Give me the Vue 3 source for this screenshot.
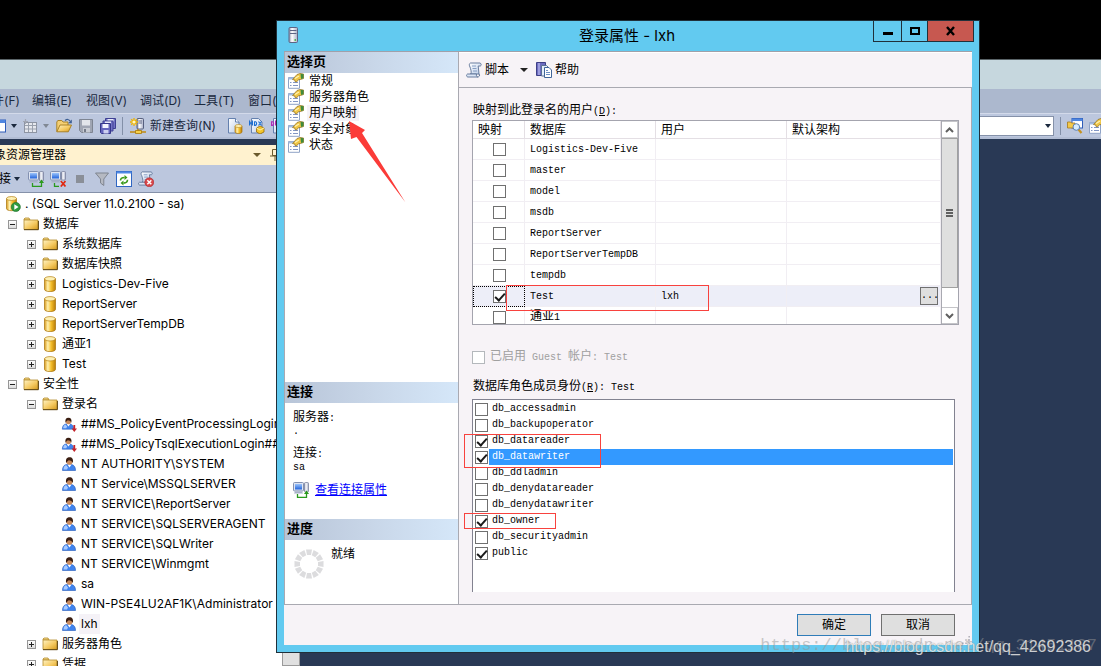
<script setup>
import { ref } from 'vue'

const menus = ['文件(F)', '编辑(E)', '视图(V)', '调试(D)', '工具(T)', '窗口(W)']

const tree = [
  { level: 0, icon: 'server', text: '. (SQL Server 11.0.2100 - sa)' },
  { level: 1, icon: 'folder', text: '数据库', toggle: 'minus' },
  { level: 2, icon: 'folder', text: '系统数据库', toggle: 'plus' },
  { level: 2, icon: 'folder', text: '数据库快照', toggle: 'plus' },
  { level: 2, icon: 'database', text: 'Logistics-Dev-Five', toggle: 'plus' },
  { level: 2, icon: 'database', text: 'ReportServer', toggle: 'plus' },
  { level: 2, icon: 'database', text: 'ReportServerTempDB', toggle: 'plus' },
  { level: 2, icon: 'database', text: '通亚1', toggle: 'plus' },
  { level: 2, icon: 'database', text: 'Test', toggle: 'plus' },
  { level: 1, icon: 'folder', text: '安全性', toggle: 'minus' },
  { level: 2, icon: 'folder', text: '登录名', toggle: 'minus' },
  { level: 3, icon: 'user-off', text: '##MS_PolicyEventProcessingLogin##' },
  { level: 3, icon: 'user-off', text: '##MS_PolicyTsqlExecutionLogin##' },
  { level: 3, icon: 'user', text: 'NT AUTHORITY\\SYSTEM' },
  { level: 3, icon: 'user', text: 'NT Service\\MSSQLSERVER' },
  { level: 3, icon: 'user', text: 'NT SERVICE\\ReportServer' },
  { level: 3, icon: 'user', text: 'NT SERVICE\\SQLSERVERAGENT' },
  { level: 3, icon: 'user', text: 'NT SERVICE\\SQLWriter' },
  { level: 3, icon: 'user', text: 'NT SERVICE\\Winmgmt' },
  { level: 3, icon: 'user', text: 'sa' },
  { level: 3, icon: 'user', text: 'WIN-PSE4LU2AF1K\\Administrator' },
  { level: 3, icon: 'user', text: 'lxh', selected: true },
  { level: 2, icon: 'folder', text: '服务器角色', toggle: 'plus' },
  { level: 2, icon: 'folder', text: '凭据', toggle: 'plus' },
]

const pages = ['常规', '服务器角色', '用户映射', '安全对象', '状态']
const currentPage = ref('用户映射')

const databases = ref([
  { name: 'Logistics-Dev-Five', user: '', mapped: false },
  { name: 'master', user: '', mapped: false },
  { name: 'model', user: '', mapped: false },
  { name: 'msdb', user: '', mapped: false },
  { name: 'ReportServer', user: '', mapped: false },
  { name: 'ReportServerTempDB', user: '', mapped: false },
  { name: 'tempdb', user: '', mapped: false },
  { name: 'Test', user: 'lxh', mapped: true, current: true },
  { name: '通亚1', user: '', mapped: false, cjk: true },
])

const roles = ref([
  { name: 'db_accessadmin', on: false },
  { name: 'db_backupoperator', on: false },
  { name: 'db_datareader', on: true },
  { name: 'db_datawriter', on: true, current: true },
  { name: 'db_ddladmin', on: false },
  { name: 'db_denydatareader', on: false },
  { name: 'db_denydatawriter', on: false },
  { name: 'db_owner', on: true },
  { name: 'db_securityadmin', on: false },
  { name: 'public', on: true },
])

const spokes = Array.from({ length: 12 }, (_, i) => i * 30)
</script>

<template>
  <div class="desktop">
    <svg class="defs" aria-hidden="true">
      <defs>
        <linearGradient id="gFolder" x1="0" y1="0" x2="1" y2="1">
          <stop offset="0" stop-color="#fff3c4" /><stop offset=".55" stop-color="#f5ca62" /><stop offset="1" stop-color="#d59a1c" />
        </linearGradient>
        <linearGradient id="gCyl" x1="0" x2="1">
          <stop offset="0" stop-color="#d99b1c" /><stop offset=".3" stop-color="#fff1b0" /><stop offset=".6" stop-color="#f6c02c" /><stop offset="1" stop-color="#b87c08" />
        </linearGradient>
        <linearGradient id="gBlue" x1="0" y1="0" x2="0" y2="1">
          <stop offset="0" stop-color="#9cc4fb" /><stop offset="1" stop-color="#2264dc" />
        </linearGradient>
        <linearGradient id="gPaper" x1="0" y1="0" x2="1" y2="1">
          <stop offset="0" stop-color="#fff" /><stop offset="1" stop-color="#b9cbe8" />
        </linearGradient>
        <linearGradient id="gTower" x1="0" x2="1">
          <stop offset="0" stop-color="#8c93b0" /><stop offset=".35" stop-color="#fff" /><stop offset="1" stop-color="#a9b0c8" />
        </linearGradient>
      </defs>
      <symbol id="i-folder" viewBox="0 0 16 16">
        <path d="M1 4V3l1-1h4l1 2z" fill="#f8dc8e" stroke="#b38a2c" stroke-width=".8" />
        <path d="M1 4h14v9.5H1z" fill="url(#gFolder)" stroke="#b38a2c" stroke-width=".8" />
        <path d="M1 13.7h14.4V5" fill="none" stroke="#5b4310" stroke-width="1" />
      </symbol>
      <symbol id="i-database" viewBox="0 0 16 16">
        <path d="M2.5 2.8v10.6c0 1.2 2.4 2.2 5.5 2.2s5.5-1 5.5-2.2V2.8z" fill="url(#gCyl)" stroke="#a8720a" stroke-width=".7" />
        <ellipse cx="8" cy="2.8" rx="5.5" ry="2.2" fill="#fdf0b4" stroke="#b68318" stroke-width=".7" />
      </symbol>
      <symbol id="i-server" viewBox="0 0 16 16">
        <path d="M1.5 2.5v10.2c0 1 2 2 5 2s5-1 5-2V2.5z" fill="url(#gCyl)" stroke="#a8720a" stroke-width=".7" />
        <ellipse cx="6.500" cy="2.500" rx="5" ry="2" fill="#fdf0b4" stroke="#b68318" stroke-width=".7" />
        <circle cx="10.800" cy="11" r="4.600" fill="#2f9a3e" stroke="#1c6e2a" stroke-width=".6" />
        <path d="M9.300 8.300v5.400l4.200-2.700z" fill="#fff" />
      </symbol>
      <symbol id="i-user" viewBox="0 0 16 16">
        <path d="M1.500 14.500c0-4 1.800-5.500 4-6h5c2.200.5 4 2 4 6z" fill="#3f83ee" stroke="#2559b8" stroke-width=".6" />
        <path d="M2.500 13.500c0-2.500 1-3.800 2.500-4.500l2 2.500-1 2z" fill="#a9cbff" />
        <path d="M6.500 8.500h4l-2 3z" fill="#fff" />
        <circle cx="8.500" cy="5.800" r="3" fill="#c98a5c" />
        <path d="M5.200 7.300c-.8-4 .5-6 3.300-6s4.100 2 3.300 5.700c-.8-2-2.300-2.700-4-2.800-1 .9-2 1.300-2.600 3.100z" fill="#3a1d10" />
      </symbol>
      <symbol id="i-user-off" viewBox="0 0 16 16">
        <use href="#i-user" x="0" y="0" width="14" height="15" />
        <path d="M13.300 9v5" stroke="#c4242c" stroke-width="1.800" />
        <path d="M10.600 12.500h5.400l-2.700 3.400z" fill="#c4242c" />
      </symbol>
      <symbol id="i-page" viewBox="0 0 16 16">
        <path d="M.5 4.500h11v10.800H.5z" fill="#fff" stroke="#8fa3c6" />
        <path d="M.5 4.500h11v2H.5z" fill="#a5bce0" />
        <path d="M2 9.500h1.500M2 12.500h1.500M5 9.500h5M5 12.500h5" stroke="#8296c4" />
        <path d="M4.500 6.500l4.500-5 3-1 3.500.5v4.500l-3 1-2 .2-2 2.300-1.500-.5-.3-1.500z" fill="#efc544" stroke="#8a6a20" stroke-width=".7" />
        <path d="M12.500.8l3 .4v4l-2.500.8z" fill="#3f8b3c" />
        <path d="M7 5.500l4-2.500" stroke="#fff2b0" stroke-width="1.200" />
      </symbol>
      <symbol id="i-connect" viewBox="0 0 16 16">
        <rect x=".5" y=".5" width="10" height="8.500" rx="1" fill="#dfe5f2" stroke="#8290b0" />
        <rect x="2" y="2" width="7" height="5.500" fill="url(#gBlue)" />
        <path d="M2 9.500h7l1 2H1z" fill="#a7b1c8" />
        <rect x="11.500" y=".5" width="4" height="9.500" rx="1" fill="url(#gTower)" stroke="#7c84a0" stroke-width=".8" />
        <path d="M4.500 12v3.300h9V11" fill="none" stroke="#2a9a1c" stroke-width="1.300" />
        <path d="M11 12l2.500-3.500L16 12z" fill="#2a9a1c" />
      </symbol>
      <symbol id="i-disconnect" viewBox="0 0 16 16">
        <rect x=".5" y=".5" width="10" height="8.500" rx="1" fill="#dfe5f2" stroke="#8290b0" />
        <rect x="2" y="2" width="7" height="5.500" fill="url(#gBlue)" />
        <path d="M2 9.500h7l1 2H1z" fill="#a7b1c8" />
        <rect x="11.500" y=".5" width="4" height="8.500" rx="1" fill="url(#gTower)" stroke="#7c84a0" stroke-width=".8" />
        <path d="M4.500 12v3.300H9" fill="none" stroke="#2a9a1c" stroke-width="1.300" />
        <path d="M10.800 10l4.700 5.500M15.500 10l-4.700 5.500" stroke="#e02810" stroke-width="1.700" />
      </symbol>
      <symbol id="i-filter" viewBox="0 0 16 16">
        <path d="M1.500 2h13L9.800 8v6.500L6.500 12V8z" fill="#b5b9c2" stroke="#7f8590" />
      </symbol>
      <symbol id="i-refresh" viewBox="0 0 16 16">
        <rect x=".5" y=".5" width="15" height="15" fill="#fff" stroke="#2f66c2" />
        <path d="M.5 1.500h15" stroke="#4f89e6" stroke-width="2" />
        <path d="M4.500 9.500c0-2 1.300-3 4-3M11.500 8.800c0 2.200-1.300 3.300-4 3.300" fill="none" stroke="#3d9b1c" stroke-width="1.600" />
        <path d="M8.500 4l3 2.500-3 2.500zM7.500 9.600l-3 2.500 3 2.400z" fill="#3d9b1c" />
      </symbol>
      <symbol id="i-scroll" viewBox="0 0 16 16">
        <path d="M4.500 1h9.500c1.500.5 1.600 2.700.3 3h-2.100l.8 8H4.700C6 10 4.500 7 4 5 3 3.500 3 1.500 4.500 1z" fill="url(#gPaper)" stroke="#5a7194" stroke-width=".9" />
        <path d="M1.500 12h9c-.4 1.500 0 2.500 1.200 3h-10C.3 14.700.2 12.500 1.500 12z" fill="#dce6f6" stroke="#5a7194" stroke-width=".9" />
        <path d="M11.500 15c1.800 0 2.600-1.500 1.600-3" fill="none" stroke="#5a7194" />
        <path d="M6 4h4M6.500 6.500h4M7 9h4" stroke="#7e95bd" stroke-width=".9" />
      </symbol>
      <symbol id="i-scroll-x" viewBox="0 0 16 16">
        <use href="#i-scroll" width="15" height="15" />
        <circle cx="11.300" cy="11.300" r="4.500" fill="#d8474a" stroke="#a8282c" stroke-width=".6" />
        <path d="M9.300 9.300l4 4M13.300 9.300l-4 4" stroke="#fff" stroke-width="1.500" />
      </symbol>
      <symbol id="i-help" viewBox="0 0 16 16">
        <path d="M.5.500h9v13h-9z" fill="#6d6cc0" stroke="#3e3f86" />
        <path d="M3 1v12" stroke="#b9b8ee" stroke-width="1.300" />
        <path d="M5.500 3.500h5l2 2v8.500h-7z" fill="#e6eefb" stroke="#5a7194" />
        <path d="M8.500 5.500h4.500l2.500 2.500v7.500h-7z" fill="#fff" stroke="#41669a" />
        <path d="M10 8.500h2M10 10.500h4M10 12.500h4" stroke="#6d8fc4" />
      </symbol>
      <symbol id="i-tower" viewBox="0 0 16 16">
        <rect x="5" y=".5" width="8.500" height="15" rx="1" fill="url(#gTower)" stroke="#5c6484" />
        <path d="M6 3.500h6.500M6 6.500h6.500" stroke="#5c6484" />
        <path d="M10.500 13h1.500" stroke="#2fae2c" stroke-width="1.500" />
      </symbol>
      <symbol id="i-window" viewBox="0 0 16 16">
        <rect x=".5" y="2" width="15" height="12" fill="#fff" stroke="#2f5cb8" />
        <path d="M1 3.500h14.500" stroke="#4f86e0" stroke-width="3" />
      </symbol>
      <symbol id="i-grid" viewBox="0 0 16 16">
        <rect x="2.500" y="4.500" width="12" height="10" fill="#e6e8ee" stroke="#8d94a2" />
        <path d="M3 7.500h11M3 11h11M6.500 5v9M10.500 5v9" stroke="#9aa1ae" />
        <path d="M1 3.500h5M3.500 1v5" stroke="#a2a7b3" stroke-width="1.200" />
      </symbol>
      <symbol id="i-open" viewBox="0 0 16 16">
        <path d="M.8 13.500V4l1-1.500h4L7 4h5v3" fill="#f4cf74" stroke="#a47a1c" stroke-width=".9" />
        <path d="M.8 13.800L4 7h11.500l-3.200 6.800z" fill="url(#gFolder)" stroke="#a47a1c" stroke-width=".9" />
        <path d="M9 2.500c2-1.500 4-1.500 5.200.8" fill="none" stroke="#3c5e94" stroke-width="1.200" />
        <path d="M15.800 1.500v3.800h-3.600z" fill="#3c5e94" />
      </symbol>
      <symbol id="i-save" viewBox="0 0 16 16">
        <path d="M1.500 1.500h13v13h-11l-2-2z" fill="#a0a6b3" stroke="#7e8592" />
        <path d="M4 2h8v5.500H4z" fill="#e2e5ea" />
        <path d="M5 10h7v4.500H5z" fill="#c8ccd4" /><path d="M6 11h2v3H6z" fill="#737a88" />
      </symbol>
      <symbol id="i-save-all" viewBox="0 0 16 16">
        <path d="M5.500.500h10v10h-10z" fill="#7273c6" stroke="#3e4092" /><path d="M7.500 1h6v3h-6z" fill="#e6e9fa" />
        <path d="M3 3h10v10H3z" fill="#7273c6" stroke="#3e4092" /><path d="M5 3.500h6v3H5z" fill="#e6e9fa" />
        <path d="M.5 5.500h10v10h-9l-1-1z" fill="#6465bd" stroke="#34368a" /><path d="M2.500 6h6v4h-6z" fill="#f2f4ff" /><path d="M3.500 12h5v3.500h-5z" fill="#cdd0f0" />
      </symbol>
      <symbol id="i-new-query" viewBox="0 0 16 16">
        <rect x="7" y=".5" width="6.500" height="10.500" rx="1" fill="url(#gTower)" stroke="#4c5574" stroke-width=".9" />
        <path d="M8.500 3h3.500M8.500 5h3.500" stroke="#5c6484" />
        <path d="M0 14h16M8 11v3" stroke="#c08a10" stroke-width="1.500" /><path d="M5.500 12.500h6v3h-6z" fill="#f7d14a" stroke="#a87808" stroke-width=".8" />
        <path d="M4 0v8M0 4h8M1.200 1.200l5.600 5.600M6.800 1.200L1.200 6.800" stroke="#f0b400" stroke-width="1.300" /><circle cx="4" cy="4" r="1.600" fill="#fff9c8" />
      </symbol>
      <symbol id="i-doc-db" viewBox="0 0 16 16">
        <path d="M1.500.500h7l3.500 3.500v11H1.500z" fill="url(#gPaper)" stroke="#6480ae" /><path d="M8.500.500v3.500H12" fill="#fff" stroke="#6480ae" />
        <path d="M8 8v5.800c0 1 1.300 1.700 3.500 1.700s3.500-.7 3.500-1.700V8z" fill="url(#gCyl)" stroke="#a8720a" stroke-width=".7" /><ellipse cx="11.500" cy="8" rx="3.500" ry="1.500" fill="#fdf0b4" stroke="#b68318" stroke-width=".6" />
      </symbol>
      <symbol id="i-mdx" viewBox="0 0 16 16">
        <path d="M2.500.500h7l3.500 3.500v11H2.500z" fill="url(#gPaper)" stroke="#6480ae" />
        <path d="M.5 7.500V3.500L2 6l1.500-2.500v4M5.500 3.500v4c2.800 0 2.800-4 0-4M9.500 3.500l3 4M12.500 3.500l-3 4" fill="none" stroke="#1c6ed0" stroke-width="1.100" />
        <path d="M11 8l4 2v4l-4 2-3.500-2v-4z" fill="#f3c62c" stroke="#9a6c06" stroke-width=".8" /><path d="M7.500 10l3.500 2 4-2" fill="none" stroke="#fff3b0" />
      </symbol>
      <symbol id="i-dmx" viewBox="0 0 16 16">
        <path d="M2.500.500h7l3.500 3.500v11H2.500z" fill="url(#gPaper)" stroke="#6480ae" />
        <path d="M.5 3.500v4c2.800 0 2.800-4 0-4M4.500 7.500v-4L6 6l1.500-2.500v4" fill="none" stroke="#b02cb8" stroke-width="1.100" />
      </symbol>
      <symbol id="i-find" viewBox="0 0 16 16">
        <rect x="5" y=".5" width="10.500" height="9.500" fill="#fff" stroke="#2f5cb8" /><path d="M5 1.800h10.500" stroke="#4f86e0" stroke-width="2.500" />
        <path d="M.5 4h3l1 1h3.500v5H.5z" fill="#f3c94c" stroke="#a47a1c" stroke-width=".8" />
        <path d="M11.500 11.500l3 3.500" stroke="#c59220" stroke-width="2.200" /><circle cx="9.300" cy="9" r="3.300" fill="#d6ecff" stroke="#5a7fb0" />
      </symbol>
    </svg>

    <div class="remote-bar"></div>

    <section class="studio">
      <div class="studio-title"></div>
      <nav class="menu-bar" aria-label="主菜单">
        <button v-for="m in menus" :key="m" type="button">{{ m }}</button>
      </nav>
      <div class="tool-bar">
        <div class="tools">
          <button type="button" class="tool" aria-label="新建"><svg class="ic"><use href="#i-window" /></svg></button>
          <i class="caret caret-a"></i>
          <button type="button" class="tool" aria-label="添加"><svg class="ic"><use href="#i-grid" /></svg></button>
          <i class="caret caret-b dim"></i>
          <button type="button" class="tool" aria-label="打开"><svg class="ic"><use href="#i-open" /></svg></button>
          <button type="button" class="tool" aria-label="保存"><svg class="ic"><use href="#i-save" /></svg></button>
          <button type="button" class="tool" aria-label="全部保存"><svg class="ic"><use href="#i-save-all" /></svg></button>
          <i class="sep"></i>
          <button type="button" class="tool query"><svg class="ic"><use href="#i-new-query" /></svg>新建查询(N)</button>
          <button type="button" class="tool" aria-label="数据库引擎查询"><svg class="ic"><use href="#i-doc-db" /></svg></button>
          <button type="button" class="tool" aria-label="MDX"><svg class="ic"><use href="#i-mdx" /></svg></button>
          <button type="button" class="tool" aria-label="DMX"><svg class="ic"><use href="#i-dmx" /></svg></button>
        </div>
        <div class="tools-end">
          <span class="combo"><select aria-label="查找"><option></option></select><i class="caret"></i></span>
          <i class="sep"></i>
          <button type="button" class="tool" aria-label="在文件中查找"><svg class="ic"><use href="#i-find" /></svg></button>
          <button type="button" class="tool" aria-label="属性窗口"><svg class="ic"><use href="#i-page" /></svg></button>
        </div>
      </div>

      <aside class="explorer">
        <header class="explorer-head">
          <h2>对象资源管理器</h2>
          <i class="caret gold"></i>
          <svg class="pin" viewBox="0 0 10 12"><path d="M2.500.500h5v6h-5zM0 7h10M5 7v5M6.500 1v6" fill="none" stroke="#6b5a2c" /></svg>
        </header>
        <div class="explorer-tools">
          <button type="button" class="link-btn">连接</button>
          <i class="caret"></i>
          <button type="button" class="tool" aria-label="连接对象"><svg class="ic"><use href="#i-connect" /></svg></button>
          <button type="button" class="tool" aria-label="断开连接"><svg class="ic"><use href="#i-disconnect" /></svg></button>
          <button type="button" class="tool" aria-label="停止"><i class="stop"></i></button>
          <button type="button" class="tool" aria-label="筛选"><svg class="ic"><use href="#i-filter" /></svg></button>
          <button type="button" class="tool" aria-label="刷新"><svg class="ic"><use href="#i-refresh" /></svg></button>
          <button type="button" class="tool" aria-label="策略"><svg class="ic"><use href="#i-scroll-x" /></svg></button>
        </div>
        <div class="tree-wrap">
          <ul class="tree">
            <li v-for="n in tree" :key="n.text" :class="'lv' + n.level">
              <button v-if="n.toggle" type="button" class="toggle" :class="n.toggle" :aria-label="n.text"></button>
              <svg class="ic"><use :href="'#i-' + n.icon" /></svg>
              <span class="node" :class="{ sel: n.selected }">{{ n.text }}</span>
            </li>
          </ul>
          <div class="tree-scroll"></div>
        </div>
      </aside>
    </section>

    <section class="dialog" role="dialog" aria-labelledby="dlg-title">
      <header class="title-bar">
        <svg class="ic app"><use href="#i-tower" /></svg>
        <h1 id="dlg-title">登录属性 - lxh</h1>
        <div class="win-btns">
          <button type="button" class="min" aria-label="最小化"><svg viewBox="0 0 12 10"><path d="M1 7.500h10" stroke="#000" stroke-width="3" /></svg></button>
          <button type="button" class="max" aria-label="最大化"><svg viewBox="0 0 12 10"><path d="M2 2h8v6H2z" fill="none" stroke="#000" stroke-width="2" /></svg></button>
          <button type="button" class="close" aria-label="关闭"><svg viewBox="0 0 12 10"><path d="M2 1l7 8M9 1L2 9" stroke="#000" stroke-width="2.400" /></svg></button>
        </div>
      </header>

      <div class="dlg-inner">
        <div class="panes">
          <aside class="side">
            <h2 class="band">选择页</h2>
            <ul class="pages">
              <li v-for="p in pages" :key="p">
                <button type="button" :class="{ on: p === currentPage }" @click="currentPage = p">
                  <svg class="ic"><use href="#i-page" /></svg><span>{{ p }}</span>
                </button>
              </li>
            </ul>
            <h2 class="band">连接</h2>
            <div class="conn">
              <dl>
                <dt>服务器<span class="mono">:</span></dt><dd class="mono">.</dd>
                <dt>连接<span class="mono">:</span></dt><dd class="mono">sa</dd>
              </dl>
              <p><svg class="ic"><use href="#i-connect" /></svg><a href="#">查看连接属性</a></p>
            </div>
            <h2 class="band">进度</h2>
            <div class="progress">
              <svg class="spin" viewBox="0 0 30 30">
                <path v-for="a in spokes" :key="a" d="M12 .5h6l-1 5.500h-4z" fill="#dcdcde" :transform="`rotate(${a} 15 15)`" />
              </svg>
              <span>就绪</span>
            </div>
          </aside>

          <main class="content">
            <div class="dlg-tools">
              <button type="button" class="tool text"><svg class="ic"><use href="#i-scroll" /></svg>脚本</button>
              <i class="caret big"></i>
              <button type="button" class="tool text"><svg class="ic"><use href="#i-help" /></svg>帮助</button>
            </div>
            <div class="body">
              <p class="cap">映射到此登录名的用户<span class="mono">(<u>D</u>):</span></p>
              <div class="grid-box">
                <table>
                  <colgroup><col class="c1" /><col class="c2" /><col class="c3" /><col /></colgroup>
                  <thead><tr><th>映射</th><th>数据库</th><th>用户</th><th>默认架构</th></tr></thead>
                  <tbody>
                    <tr v-for="d in databases" :key="d.name" :class="{ cur: d.current }">
                      <td class="chk"><input v-model="d.mapped" type="checkbox" class="box" :aria-label="d.name" /></td>
                      <td><template v-if="d.cjk">通亚<span class="mono">1</span></template><span v-else class="mono">{{ d.name }}</span></td>
                      <td><span class="mono">{{ d.user }}</span></td>
                      <td class="last"><button v-if="d.current" type="button" class="more" aria-label="浏览">...</button></td>
                    </tr>
                  </tbody>
                </table>
                <div class="vbar">
                  <button type="button" aria-label="向上"><svg viewBox="0 0 9 6"><path d="M1 5l3.500-3.500L8 5" /></svg></button>
                  <div class="track"><div class="thumb"><i></i><i></i><i></i></div></div>
                  <button type="button" aria-label="向下"><svg viewBox="0 0 9 6"><path d="M1 1l3.500 3.500L8 1" /></svg></button>
                </div>
              </div>
              <label class="guest"><input type="checkbox" class="box" disabled /><span>已启用<span class="mono"> Guest </span>帐户<span class="mono">: Test</span></span></label>
              <p class="cap2">数据库角色成员身份<span class="mono">(<u>R</u>): Test</span></p>
              <ul class="roles">
                <li v-for="r in roles" :key="r.name" :class="{ cur: r.current }">
                  <label><input v-model="r.on" type="checkbox" class="box" /><span class="mono">{{ r.name }}</span></label>
                </li>
              </ul>
            </div>
          </main>
        </div>
        <footer class="foot">
          <button type="button" class="btn primary">确定</button>
          <button type="button" class="btn">取消</button>
          <svg class="grip" viewBox="0 0 10 10"><path d="M8 0h2v2H8zM4 4h2v2H4zM8 4h2v2H8zM0 8h2v2H0zM4 8h2v2H4zM8 8h2v2H8z" fill="#b4b2ba" /></svg>
        </footer>
      </div>
    </section>

    <div class="mark mark-user"></div>
    <div class="mark mark-read"></div>
    <div class="mark mark-owner"></div>
    <svg class="arrow" viewBox="0 0 58 84"><path d="M1 1L17 10l-3 3L57.500 82.500 8.500 17 3 19z" fill="#fb3b38" /></svg>

    <div class="wm wm-old">https://blog.csdn.net/qq_31451137</div>
    <div class="wm wm-new">https://blog.csdn.net/qq_42692386</div>
  </div>
</template>

<style>
html, body { margin: 0; background: #293955; }
</style>

<style scoped>
* { box-sizing: border-box; }
.desktop {
  position: relative; height: 100vh; overflow: hidden; display: flex; flex-direction: column;
  font: 12px/16px Inter, "Noto Sans CJK SC", sans-serif; color: #000; background: #293955;
}
button { font: inherit; color: inherit; background: none; border: 0; padding: 0; margin: 0; white-space: nowrap; }
h1, h2, p, ul, dl, dd { margin: 0; padding: 0; font-weight: normal; list-style: none; }
.defs { position: absolute; width: 0; height: 0; }
.ic { width: 16px; height: 16px; flex: none; display: block; }
.mono { font-family: "Liberation Mono", monospace; font-size: 10px; white-space: pre; }
.remote-bar { flex: none; height: 59px; background: #000; }

.studio { flex: 1; min-height: 0; display: flex; flex-direction: column; border-top: 1px solid #5a6468; }
.studio-title { flex: none; height: 29px; background: #c6d7de; }
.menu-bar { flex: none; display: flex; height: 24px; background: #acb8ce; overflow: hidden; color: #1b293e; }
.menu-bar button { flex: none; width: 54px; text-align: left; }
.menu-bar button:first-child { margin-left: -20px; width: 52px; }
.tool-bar { flex: none; display: flex; justify-content: space-between; height: 26px; background: #bcc7de; border-top: 1px solid #d3daea; border-bottom: 2px solid #b2bdd4; color: #1b293e; }
.tools, .tools-end { display: flex; align-items: center; }
.tools { margin-left: -10px; gap: 6px; }
.tools-end { gap: 6px; margin-right: -4px; }
.tool { display: flex; align-items: center; flex: none; }
.query { gap: 4px; margin: 0 5px 0 1px; }
.caret { flex: none; width: 0; height: 0; border: 3px solid transparent; border-top: 4px solid #1b293e; border-bottom: 0; }
.caret-a, .caret-b { margin: 0 -1px; }
.caret-b { margin-right: 1px; }
.caret.dim { border-top-color: #808894; }
.caret.gold { border-width: 4px 4px 0; border-top-color: #6b5a2c; }
.caret.big { border-width: 4px 4px 0; border-top-color: #222; }
.sep { flex: none; width: 1px; height: 18px; background: #8390a8; }
.combo { position: relative; display: block; width: 200px; height: 20px; }
.combo select { appearance: none; width: 100%; height: 20px; border: 1px solid #8591a9; background: #fff; border-radius: 0; display: block; }
.combo .caret { position: absolute; right: 3px; top: 8px; }

.explorer { flex: 1; min-height: 0; width: 300px; margin-top: 6px; display: flex; flex-direction: column; }
.explorer-head { flex: none; display: flex; align-items: center; height: 20px; background: #fff2cf; overflow: hidden; }
.explorer-head h2 { flex: none; width: 271px; margin-left: -18px; font-size: 12px; }
.pin { flex: none; width: 10px; height: 12px; margin-left: 9px; }
.explorer-tools { flex: none; display: flex; align-items: center; gap: 6px; height: 28px; background: #bcc7de; border-bottom: 1px solid #8591a9; }
.link-btn { margin-left: -13px; margin-right: -3px; }
.explorer-tools .caret { margin-right: 2px; }
.stop { display: block; width: 8px; height: 8px; background: #8a8f98; margin: 0 4px; }
.tree-wrap { flex: 1; min-height: 0; display: flex; background: #fff; }
.tree { flex: 1; min-width: 0; overflow: hidden; padding-top: 1px; }
.tree li { display: flex; align-items: center; height: 20px; white-space: nowrap; }
.tree .lv0 { padding-left: 5px; }
.tree .lv1 { padding-left: 8px; }
.tree .lv2 { padding-left: 27px; }
.tree .lv3 { padding-left: 61px; }
.toggle { position: relative; flex: none; width: 9px; height: 9px; border: 1px solid #969696; background: linear-gradient(#fff, #dcdcdc); margin-right: 6px; }
.toggle::before { content: ""; position: absolute; left: 1px; right: 1px; top: 3px; height: 1px; background: #222; }
.toggle.plus::after { content: ""; position: absolute; top: 1px; bottom: 1px; left: 3px; width: 1px; background: #222; }
.node { padding: 2px; margin-left: 2px; }
.node.sel { background: #f5f2f7; }
.tree-scroll { flex: none; width: 18px; background: #e0e0e0; border: 1px solid #9a9a9a; }

.dialog { position: absolute; left: 276px; right: 121px; top: 20px; background: #62caf0; border: 1px solid #20303a; padding: 0 7px 7px; }
.title-bar { display: flex; height: 30px; align-items: flex-start; }
.title-bar .app { margin-top: 6px; }
.title-bar h1 { flex: 1; text-align: center; font-size: 15px; line-height: 30px; margin-left: 81px; }
.win-btns { display: flex; flex: none; margin-right: -2px; border: 1px solid #20303a; border-top: 0; height: 21px; }
.win-btns button { display: flex; align-items: center; justify-content: center; border-right: 1px solid #20303a; }
.win-btns svg { width: 12px; height: 10px; display: block; }
.win-btns .min { width: 28px; }
.win-btns .max { width: 26px; }
.win-btns .close { width: 45px; border-right: 0; background: #c75850; }
.dlg-inner { background: #f7f3f7; border-top: 1px solid #a0a0aa; }
.panes { display: flex; border-bottom: 1px solid #a9a9b1; }
.side { flex: none; width: 175px; background: #fff; border-left: 1px solid #a9a9b1; border-right: 1px solid #a9a9b1; display: flex; flex-direction: column; }
.band { flex: none; height: 21px; line-height: 18px; padding-left: 2px; font-size: 13px; font-weight: bold; background: linear-gradient(90deg, #b8c5d8, #c8d6e8 50%, #d5e7f9); }
.pages { flex: 1; }
.pages button { display: flex; align-items: center; height: 16px; gap: 3px; margin-left: 3px; }
.pages span { height: 16px; padding: 0 2px; }
.pages .on span { background: #f5f2f7; }
.conn { flex: none; height: 116px; padding: 6px 0 0 8px; }
.conn dt { line-height: 16px; height: 16px; }
.conn dd { height: 20px; line-height: 14px; }
.conn p { display: flex; align-items: center; gap: 6px; margin-top: 1px; height: 16px; }
.conn a { color: #00f; text-decoration: underline; }
.progress { flex: none; height: 64px; padding: 6px 0 0 9px; display: flex; gap: 7px; }
.spin { width: 30px; height: 30px; margin-top: 3px; }
.content { flex: 1; min-width: 0; }
.dlg-tools { display: flex; align-items: center; height: 36px; padding-left: 7px; border-bottom: 1px solid #a9a9b1; border-top: 1px solid #fff; }
.tool.text { gap: 3px; }
.big { margin: 0 8px 0 11px; }
.body { border-right: 1px solid #a9a9b1; padding: 14px 12px 12px 13px; }
.cap { height: 18px; padding-left: 1px; }
.grid-box { display: flex; height: 205px; overflow: hidden; background: #fff; border: 1px solid #a4a4ae; }
table { flex: 1; min-width: 0; border-collapse: separate; border-spacing: 0; table-layout: fixed; height: max-content; }
.c1 { width: 52px; } .c2 { width: 131px; } .c3 { width: 131px; }
th { height: 18px; padding: 0 5px; text-align: left; font-weight: normal; line-height: 16px; border-right: 1px solid #e4dfe4; border-bottom: 1px solid #e4dfe4; }
td { height: 21px; padding: 0 5px; line-height: 16px; border-right: 1px solid #f1eef3; border-bottom: 1px solid #f1eef3; }
td.chk { padding: 1px 0 0 20px; }
td.last { text-align: right; padding: 0 2px 0 0; }
.cur td { background: #edeef8; }
.cur td.chk { outline: 1px dotted #000; outline-offset: -1px; }
.box { appearance: none; display: block; flex: none; margin: 0; width: 13px; height: 13px; border: 1px solid #707070; border-radius: 0; background: #fff; position: relative; }
.box:checked::after { content: ""; position: absolute; left: 3px; top: 0; width: 4px; height: 8px; border: solid #1a1a1a; border-width: 0 2px 2px 0; transform: rotate(42deg); }
.box:disabled { border-color: #b4b8bc; }
.more { width: 18px; height: 18px; border: 1px solid #707070; background: #dfdfdf; font: 10px/12px "Liberation Mono", monospace; display: block; margin-left: auto; }
.vbar { flex: none; width: 17px; border-left: 1px solid #a9a9b1; display: flex; flex-direction: column; }
.vbar button { height: 17px; border: 1px solid #c4c4c8; border-left: 0; display: flex; align-items: center; justify-content: center; }
.vbar svg { width: 9px; height: 6px; fill: none; stroke: #606060; stroke-width: 2; }
.track { flex: 1; display: flex; flex-direction: column; padding-bottom: 19px; }
.thumb { flex: 1; background: #dfdfdf; border: 1px solid #a0a0a0; border-left: 0; display: flex; flex-direction: column; gap: 1px; align-items: center; justify-content: center; }
.thumb i { width: 7px; height: 2px; background: #606060; }
.guest { display: flex; align-items: center; gap: 5px; color: #a0a0a0; height: 16px; margin-top: 24px; white-space: pre; }
.cap2 { margin-top: 13px; height: 21px; padding-left: 1px; }
.roles { height: 193px; margin-right: 4px; background: #fff; border: 1px solid #828290; border-bottom: 0; padding: 1px 1px 0 2px; }
.roles label { display: flex; align-items: center; height: 16px; }
.roles .mono { flex: 1; height: 16px; line-height: 15px; padding-left: 3px; margin-left: 1px; }
.roles .cur .mono { background: #3399ff; color: #fff; }
.foot { position: relative; display: flex; justify-content: flex-end; gap: 10px; padding: 9px 17px 9px 0; }
.btn { width: 74px; height: 22px; background: #dfdfdf; border: 1px solid #707070; }
.btn.primary { border-color: #2f7cb8; }
.grip { position: absolute; right: 2px; bottom: 1px; width: 8px; height: 8px; }

.mark { position: absolute; border: 1px solid #f8423e; }
.mark-user { left: 506px; top: 285px; width: 203px; height: 26px; }
.mark-read { left: 464px; top: 434px; width: 137px; height: 34px; }
.mark-owner { left: 464px; top: 513px; width: 92px; height: 16px; }
.arrow { position: absolute; left: 348px; top: 120px; width: 58px; height: 84px; }
.wm { position: absolute; white-space: nowrap; pointer-events: none; right: 10px; }
.wm-old { right: 4px; bottom: 10px; font: 17px/20px "Liberation Mono", monospace; color: rgba(150, 150, 150, .5); }
.wm-new { bottom: 9px; font: 16px/20px "Liberation Sans", Arial, sans-serif; color: rgba(255, 255, 255, .75); text-shadow: 0 0 1px rgba(60, 60, 60, .6); }
</style>
